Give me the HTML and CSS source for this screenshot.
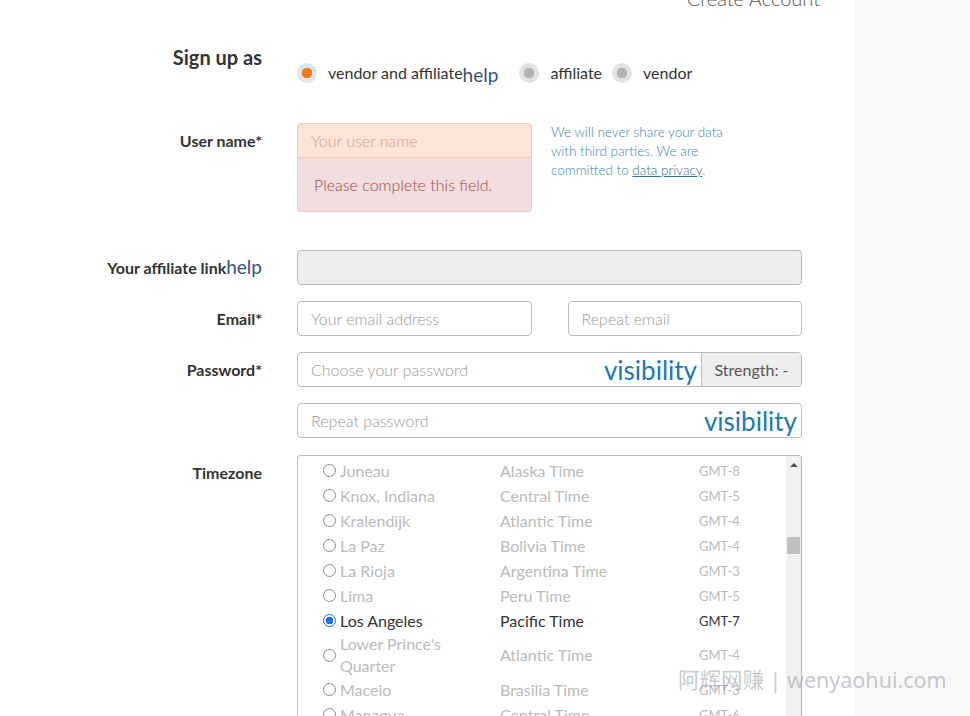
FILE: index.html
```html
<!DOCTYPE html>
<html lang="en">
<head>
    <meta charset="UTF-8" />
    <title>Create Account</title>
    <link rel="stylesheet" href="styles.css">
</head>
<body>
    <div class="page">
        <div class="panel">
            <h1 class="title">Create Account</h1>

            <form class="signup">
                <div class="row row-role">
                    <div class="label label-big">Sign up as</div>
                    <div class="roles">
                        <span class="role"><span class="dot checked"></span>vendor and affiliate<span class="help help-role">help</span></span>
                        <span class="role"><span class="dot"></span>affiliate</span>
                        <span class="role"><span class="dot"></span>vendor</span>
                    </div>
                </div>

                <div class="row row-user">
                    <div class="label">User name*</div>
                    <div class="user-cols">
                        <div>
                            <input class="input input-error" type="text" placeholder="Your user name">
                            <div class="error-box">Please complete this field.</div>
                        </div>
                        <p class="note">We will never share your data with third parties. We are committed to <a href="#">data privacy</a>.</p>
                    </div>
                </div>

                <div class="row row-gap">
                    <div class="label">Your affiliate link<span class="help">help</span></div>
                    <input class="input input-disabled" type="text" disabled>
                </div>

                <div class="row">
                    <div class="label">Email*</div>
                    <div class="pair">
                        <input class="input" type="email" placeholder="Your email address">
                        <input class="input" type="email" placeholder="Repeat email">
                    </div>
                </div>

                <div class="row">
                    <div class="label">Password*</div>
                    <div class="group">
                        <div class="field">
                            <input class="bare" type="password" placeholder="Choose your password">
                            <span class="visibility">visibility</span>
                        </div>
                        <span class="addon">Strength: -</span>
                    </div>
                </div>

                <div class="row row-repeat">
                    <div class="label"></div>
                    <div class="group">
                        <div class="field">
                            <input class="bare" type="password" placeholder="Repeat password">
                            <span class="visibility">visibility</span>
                        </div>
                    </div>
                </div>

                <div class="row">
                    <div class="label">Timezone</div>
                    <div class="tz-box">
                        <div class="tz-list">
                            <div class="tz"><span class="radio"></span><span class="city">Juneau</span><span class="zone">Alaska Time</span><span class="gmt">GMT-8</span></div>
                            <div class="tz"><span class="radio"></span><span class="city">Knox, Indiana</span><span class="zone">Central Time</span><span class="gmt">GMT-5</span></div>
                            <div class="tz"><span class="radio"></span><span class="city">Kralendijk</span><span class="zone">Atlantic Time</span><span class="gmt">GMT-4</span></div>
                            <div class="tz"><span class="radio"></span><span class="city">La Paz</span><span class="zone">Bolivia Time</span><span class="gmt">GMT-4</span></div>
                            <div class="tz"><span class="radio"></span><span class="city">La Rioja</span><span class="zone">Argentina Time</span><span class="gmt">GMT-3</span></div>
                            <div class="tz"><span class="radio"></span><span class="city">Lima</span><span class="zone">Peru Time</span><span class="gmt">GMT-5</span></div>
                            <div class="tz selected"><span class="radio"></span><span class="city">Los Angeles</span><span class="zone">Pacific Time</span><span class="gmt">GMT-7</span></div>
                            <div class="tz"><span class="radio"></span><span class="city">Lower Prince's Quarter</span><span class="zone">Atlantic Time</span><span class="gmt">GMT-4</span></div>
                            <div class="tz"><span class="radio"></span><span class="city">Maceio</span><span class="zone">Brasilia Time</span><span class="gmt">GMT-3</span></div>
                            <div class="tz"><span class="radio"></span><span class="city">Managua</span><span class="zone">Central Time</span><span class="gmt">GMT-6</span></div>
                            <div class="tz"><span class="radio"></span><span class="city">Manaus</span><span class="zone">Amazon Time</span><span class="gmt">GMT-4</span></div>
                        </div>
                        <div class="scrollbar">
                            <span class="arrow"></span>
                            <span class="thumb"></span>
                        </div>
                    </div>
                </div>
            </form>
        </div>
        <div class="side"></div>
    </div>

    <div class="watermark">阿辉网赚 | wenyaohui.com</div>
</body>
</html>
```

FILE: styles.css
```css
* {
    box-sizing: border-box;
    margin: 0;
    padding: 0;
}

body {
    font-family: Lato, "Open Sans", Arial, sans-serif;
    color: #333;
    background-color: #f8f8f8;
    height: 716px;
    overflow: hidden;
}

.page {
    display: flex;
    min-height: 716px;
}

.panel {
    width: 855px;
    background-color: #fff;
    padding-left: 92px;
}

.side {
    flex: 1;
    background-color: #f8f8f8;
}

.title {
    margin-top: -14px;
    margin-bottom: 35px;
    padding-right: 35px;
    text-align: right;
    font-size: 20px;
    line-height: 24px;
    font-weight: 300;
    color: #555;
}

/* form rows: right aligned label, then the control */
.row {
    display: grid;
    grid-template-columns: 170px 505px;
    column-gap: 35px;
    align-items: start;
    margin-bottom: 16px;
}

.label {
    text-align: right;
    font-size: 16px;
    font-weight: 700;
    line-height: 35px;
    height: 35px;
    white-space: nowrap;
}

.label-big {
    font-size: 20px;
    line-height: 24px;
    height: 24px;
}

.help {
    font-weight: 400;
    font-size: 19px;
    line-height: 1;
    color: #34547a;
}

.row-role {
    margin-bottom: 39px;
}

.roles {
    display: flex;
    align-items: center;
    margin-top: 16px;
    font-size: 16px;
    line-height: 20px;
}

.role {
    display: flex;
    align-items: center;
    margin-right: 10px;
}

.help-role {
    margin-right: 11px;
    margin-top: 4px;
}

.dot {
    width: 20px;
    height: 20px;
    margin-right: 11px;
    border-radius: 50%;
    background: radial-gradient(circle, #b3b3b3 0 5px, #e2e2e2 5.5px);
}

.dot.checked {
    background: radial-gradient(circle, #f47a20 0 5px, #dfe5ec 5.5px);
}

.row-user {
    margin-bottom: 38px;
}

.user-cols {
    display: grid;
    grid-template-columns: 235px 185px;
    column-gap: 19px;
}

.input {
    display: block;
    width: 100%;
    height: 35px;
    padding: 0 13px;
    border: 1px solid #bbb;
    border-radius: 4px;
    background-color: #fff;
    font-family: inherit;
    font-size: 16px;
    font-weight: 300;
    color: #333;
}

.input::placeholder,
.bare::placeholder {
    color: #999;
}

.input-error {
    background-color: #fde3d8;
    border-color: #f6c6b1;
    border-radius: 4px 4px 0 0;
}

.input-error::placeholder {
    color: #c4a297;
}

.error-box {
    height: 54px;
    padding: 0 16px;
    background-color: #f2dede;
    border: 1px solid #ebcfcf;
    border-top: none;
    border-radius: 0 0 4px 4px;
    font-size: 16px;
    font-weight: 300;
    line-height: 53px;
    color: #a94442;
}

.note {
    margin-top: 0;
    font-size: 13.5px;
    font-weight: 300;
    line-height: 19px;
    color: #3b86b5;
}

.note a {
    color: #2f6f98;
}

.input-disabled {
    background-color: #eee;
}

.pair {
    display: grid;
    grid-template-columns: 1fr 1fr;
    column-gap: 36px;
}

/* password field with the eye label and the strength addon */
.group {
    display: flex;
    height: 35px;
    border: 1px solid #bbb;
    border-radius: 4px;
    overflow: hidden;
}

.field {
    flex: 1;
    display: flex;
    align-items: center;
    padding: 0 4px 0 13px;
}

.bare {
    flex: 1;
    min-width: 0;
    border: none;
    outline: none;
    background: transparent;
    font-family: inherit;
    font-size: 16px;
    font-weight: 300;
}

.visibility {
    font-size: 26px;
    color: #2079b7;
    line-height: 1;
}

.addon {
    width: 100px;
    background-color: #eee;
    border-left: 1px solid #bbb;
    font-size: 16px;
    line-height: 33px;
    text-align: center;
    color: #555;
}

.row-repeat {
    margin-bottom: 17px;
}

/* timezone list */
.tz-box {
    display: flex;
    height: 290px;
    border: 1px solid #bbb;
    border-bottom: none;
    border-radius: 4px 4px 0 0;
    overflow: hidden;
}

.tz-list {
    flex: 1;
    padding: 2px 0 0 25px;
}

.tz {
    display: flex;
    align-items: center;
    min-height: 25px;
    font-size: 16px;
    line-height: 22px;
    color: #bbb;
}

.radio {
    flex: none;
    width: 13px;
    height: 13px;
    margin-right: 4px;
    border: 1px solid #8a8a8a;
    border-radius: 50%;
    background-color: #fff;
}

.city {
    width: 140px;
    margin-right: 20px;
}

.zone {
    width: 199px;
}

.gmt {
    font-size: 13px;
}

.tz.selected {
    color: #333;
}

.tz.selected .radio {
    border-color: #1a6fe0;
    background: radial-gradient(circle, #1a73e8 0 3.5px, #fff 4px);
}

.scrollbar {
    width: 15px;
    background-color: #f1f1f1;
    display: flex;
    flex-direction: column;
    align-items: center;
}

.arrow {
    margin-top: 7px;
    width: 0;
    height: 0;
    border-left: 4px solid transparent;
    border-right: 4px solid transparent;
    border-bottom: 4px solid #505050;
}

.thumb {
    margin-top: 70px;
    width: 13px;
    height: 17px;
    background-color: #c1c1c1;
}

.watermark {
    position: absolute;
    left: 678px;
    top: 666px;
    font-family: "Noto Sans", "Noto Sans CJK SC", sans-serif;
    font-size: 21.5px;
    line-height: 28px;
    color: rgba(150, 155, 165, 0.55);
    white-space: nowrap;
}
```
